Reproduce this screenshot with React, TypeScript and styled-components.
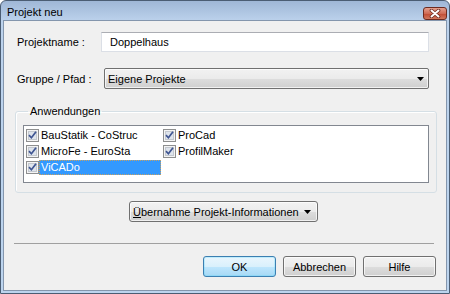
import React from "react";
import styled, { createGlobalStyle, css } from "styled-components";

const GlobalStyle = createGlobalStyle`
  html, body { margin: 0; padding: 0; background: #ffffff; }
  body { font-family: "Liberation Sans", Arial, sans-serif; font-size: 11px; color: #000; }
  #root { width: 450px; height: 294px; }
`;

const Window = styled.div`
  width: 450px;
  height: 294px;
  box-sizing: border-box;
  display: flex;
  flex-direction: column;
  border: 1px solid #4b5d73;
  border-radius: 6px 6px 0 0;
  background: linear-gradient(#9fb7d6, #bcd2ec 20px, #bcd4ee);
  padding: 0 2px 2px 2px;
  overflow: hidden;
`;

const TitleBar = styled.div`
  height: 19px;
  display: flex;
  align-items: center;
  justify-content: space-between;
  padding: 0 0 0 4px;
`;

const Title = styled.span`
  font-size: 11px;
  color: #000;
  margin-top: 2px;
`;

const CloseButton = styled.div`
  width: 24px;
  height: 13px;
  box-sizing: border-box;
  margin-top: 5px;
  border: 1px solid #6d2b20;
  border-radius: 3px;
  background: linear-gradient(#e4a08e, #cf6b55 50%, #c04a32 51%, #d0785e);
  display: flex;
  align-items: center;
  justify-content: center;
`;

const Body = styled.div`
  flex: 1;
  background: #f0f0f0;
  border: 1px solid #8496ad;
  display: flex;
  flex-direction: column;
  padding-top: 11px;
`;

const FieldRow = styled.div<{ $gap?: number }>`
  display: flex;
  align-items: center;
  padding: 0 17px 0 13px;
  margin-top: ${(p) => p.$gap ?? 0}px;
`;

const Label = styled.span`
  width: 84px;
  flex: none;
`;

const TextInput = styled.input`
  flex: 1;
  height: 20px;
  box-sizing: border-box;
  margin: 0;
  padding: 0 0 0 8px;
  border: 1px solid #dbdfe6;
  border-top-color: #abadb3;
  background: #fff;
  font-family: "Liberation Sans", Arial, sans-serif;
  font-size: 11px;
  color: #000;
  outline: none;
`;

const buttonFace = css`
  box-sizing: border-box;
  border: 1px solid #707070;
  border-radius: 3px;
  background: linear-gradient(#f2f2f2, #ebebeb 50%, #dddddd 51%, #cfcfcf);
  box-shadow: inset 0 0 0 1px rgba(255, 255, 255, 0.7);
`;

const Select = styled.div`
  ${buttonFace};
  flex: 1;
  height: 21px;
  margin-left: 3px;
  border-radius: 2px;
  display: flex;
  align-items: center;
  justify-content: space-between;
  padding: 0 4px 0 3px;
`;

const Group = styled.fieldset`
  margin: 16px 9px 0 11px;
  padding: 7px 7px 9px 7px;
  border: 1px solid #d5dfe5;
  border-radius: 3px;
  box-shadow: inset 1px 1px 0 #ffffff;
`;

const Legend = styled.legend`
  margin-left: 5px;
  padding: 0 2px;
  line-height: 13px;
`;

const ListBox = styled.div`
  height: 58px;
  box-sizing: border-box;
  border: 1px solid #828790;
  background: #fff;
  padding-top: 1px;
  display: grid;
  grid-template-columns: 137px 137px;
  grid-template-rows: repeat(3, 16px);
  grid-auto-flow: column;
`;

const Item = styled.div`
  display: flex;
  align-items: center;
  padding-left: 2px;
`;

const ItemLabel = styled.span<{ $selected?: boolean }>`
  flex: 1;
  height: 15px;
  box-sizing: border-box;
  line-height: 13px;
  padding: 0 1px;
  border: 1px dotted transparent;
  ${(p) =>
    p.$selected &&
    css`
      background: #3399ff;
      color: #fff;
      border-color: #c8a060;
    `}
`;

const MenuButton = styled.div`
  ${buttonFace};
  width: 189px;
  height: 21px;
  margin: 8px 0 0 125px;
  display: flex;
  align-items: center;
  justify-content: space-between;
  padding: 0 6px 0 3px;
`;

const Separator = styled.div`
  margin: 21px 12px 0 10px;
  border-top: 1px solid #a0a0a0;
`;

const ButtonRow = styled.div`
  display: flex;
  justify-content: flex-end;
  gap: 7px;
  padding-right: 10px;
  margin-top: 12px;
`;

const DialogButton = styled.div<{ $default?: boolean }>`
  ${buttonFace};
  width: 73px;
  height: 21px;
  display: flex;
  align-items: center;
  justify-content: center;
  ${(p) =>
    p.$default &&
    css`
      border-color: #3c7fb1;
      background: linear-gradient(#eaf6fd, #d9f0fc 50%, #bee6fd 51%, #a7d9f5);
      box-shadow: inset 0 0 0 1px #48d2fb40;
    `}
`;

const Arrow = () => (
  <svg width="7" height="4" viewBox="0 0 7 4">
    <path d="M0 0 H7 L3.5 4 Z" fill="#000" />
  </svg>
);

const CloseX = () => (
  <svg width="12" height="9" viewBox="0 0 12 9">
    <path d="M2.5 1.5 L9.5 7.5 M9.5 1.5 L2.5 7.5" stroke="#6b2a1f" strokeWidth="3.6" strokeLinecap="round" />
    <path d="M2.5 1.5 L9.5 7.5 M9.5 1.5 L2.5 7.5" stroke="#ffffff" strokeWidth="2" strokeLinecap="round" />
  </svg>
);

const CheckBox = () => (
  <svg width="13" height="13" viewBox="0 0 13 13" style={{ flex: "none" }}>
    <rect x="0.5" y="0.5" width="12" height="12" fill="#f4f4f4" stroke="#8e8f8f" />
    <rect x="2.5" y="2.5" width="8" height="8" fill="#dee4ec" stroke="#c3c8cf" />
    <path d="M3 6.2 L5.4 8.8 L10 2.8" stroke="#3f5592" strokeWidth="1.7" fill="none" />
  </svg>
);

const apps = [
  { name: "BauStatik - CoStruc" },
  { name: "MicroFe - EuroSta" },
  { name: "ViCADo", selected: true },
  { name: "ProCad" },
  { name: "ProfilMaker" },
];

export default function App() {
  return (
    <>
      <GlobalStyle />
      <Window>
        <TitleBar>
          <Title>Projekt neu</Title>
          <CloseButton>
            <CloseX />
          </CloseButton>
        </TitleBar>
        <Body>
          <FieldRow>
            <Label>Projektname :</Label>
            <TextInput readOnly defaultValue="Doppelhaus" />
          </FieldRow>
          <FieldRow $gap={16}>
            <Label>Gruppe / Pfad :</Label>
            <Select>
              <span>Eigene Projekte</span>
              <Arrow />
            </Select>
          </FieldRow>
          <Group>
            <Legend>Anwendungen</Legend>
            <ListBox>
              {apps.map((a) => (
                <Item key={a.name}>
                  <CheckBox />
                  <ItemLabel $selected={a.selected}>{a.name}</ItemLabel>
                </Item>
              ))}
            </ListBox>
          </Group>
          <MenuButton>
            <span>
              <u>Ü</u>bernahme Projekt-Informationen
            </span>
            <Arrow />
          </MenuButton>
          <Separator />
          <ButtonRow>
            <DialogButton $default>OK</DialogButton>
            <DialogButton>Abbrechen</DialogButton>
            <DialogButton>Hilfe</DialogButton>
          </ButtonRow>
        </Body>
      </Window>
    </>
  );
}
